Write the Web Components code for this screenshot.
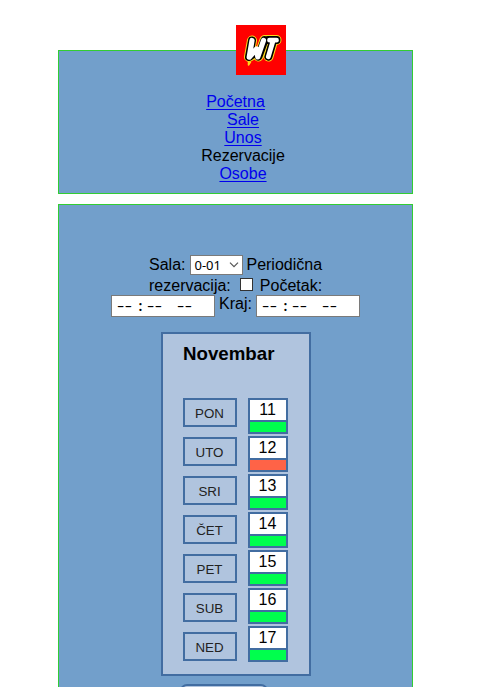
<!DOCTYPE html>
<html lang="bs">
<head>
<meta charset="utf-8">
<title>Rezervacije</title>
<style>
html{height:100%;overflow:hidden}
body{margin:0;height:687px;overflow:hidden;background:#fff;color:#000;font:16px/18px "Liberation Sans",Arial,sans-serif;--line:#426da1;--panel:#729fcb;--soft:#b0c4de}
</style>
</head>
<body>
<wt-page></wt-page>
<script>
function define(name, html, setup) {
  const t = document.createElement('template');
  t.innerHTML = html;
  customElements.define(name, class extends HTMLElement {
    constructor() {
      super();
      this.attachShadow({mode: 'open'}).append(t.content.cloneNode(true));
    }
    connectedCallback() { if (setup) setup(this, this.shadowRoot); }
  });
}

define('wt-logo', `<style>:host{display:block;width:50px;height:50px}svg{display:block}</style>
<svg width="50" height="50" viewBox="0 0 50 50">
<rect width="50" height="50" fill="#f00"/>
<g fill="none" stroke-linejoin="round" stroke-linecap="round">
<g stroke="#ffd91a" stroke-width="10"><path d="M16 15.500L13 32L20 28L22.500 31.500L28.500 15M29 15H40.500M37 16L32.500 31.500"/><path d="M12.500 36v4l2-3" stroke-width="1.500"/></g>
<path stroke="#000" stroke-width="8" d="M16 15.500L13 32L20 27L22.500 31.500L28.500 15M32 15H40.500M37 16L32.500 31.500"/>
<path stroke="#fff" stroke-width="5.200" d="M16 15.500L13.200 32.200L20.500 24L21.800 32L27.500 15.500"/>
<path stroke="#000" stroke-width="7" d="M34 15.200H40.500M37 16L32.300 31.800"/>
<path stroke="#fff" stroke-width="4.800" d="M33.500 15.200H40.500M37 16L32.300 31.800"/>
</g></svg>`);

define('wt-panel', `<style>:host{display:block;box-sizing:border-box;width:355px;border:1px solid #32cd32;background:var(--panel)}</style><slot></slot>`);

define('wt-nav-item', `<style>:host{display:block;height:18px;text-align:center}a{color:#00e;text-decoration:underline 1px;text-underline-offset:2px;text-decoration-skip-ink:none}</style><slot></slot>`, (el, root) => {
  if (!el.hasAttribute('href') || root.querySelector('a')) return;
  const a = document.createElement('a');
  a.href = el.getAttribute('href');
  a.append(root.querySelector('slot'));
  root.append(a);
});

define('wt-select', `<style>:host{display:inline-flex;box-sizing:border-box;width:53px;height:20px;border:1px solid #7a7a7a;background:#fff;align-items:center;justify-content:space-between;padding:0 3px;font:13px/18px "Noto Sans",sans-serif}</style><slot></slot><svg width="10" height="6" viewBox="0 0 10 6"><path d="M1 .7l4 4 4-4" fill="none" stroke="#555" stroke-width="1.200"/></svg>`);

define('wt-check', `<style>:host{display:block;box-sizing:border-box;width:13px;height:13px;border:1px solid #333;background:#fff}</style>`);

define('wt-time', `<style>:host{display:grid;box-sizing:border-box;width:104px;height:22px;border:1px solid #7a7a7a;background:#fff;grid-template-columns:17px 13px 17px 13px 17px;padding-left:5px;align-items:center;font:13.33px/20px "Noto Sans",sans-serif}
span{display:block;font-size:15px;line-height:18px;letter-spacing:.3px;white-space:nowrap;height:20px;transform:scaleX(1.5);transform-origin:0 50%}.c{font-size:14px;line-height:20px;text-align:center;letter-spacing:0;font-weight:600;transform:none}</style>
<span>--</span><span class="c">:</span><span>--</span><i></i><span>--</span>`);

define('wt-day', `<style>:host{display:flex;box-sizing:border-box;width:54px;height:29px;border:2px solid var(--line);align-items:center;justify-content:center;font-size:13.33px;line-height:15px;color:#222;padding:1px 1px 0 0}</style><slot></slot>`);

define('wt-date', `<style>:host{display:flex;flex-direction:column;box-sizing:border-box;width:40px;height:36px;border:2px solid var(--line);background:#fff;text-align:center}
div{height:20px;line-height:19px;padding-right:1px}i{display:block;height:10px;border-top:2px solid var(--line);background:#00ff4d}:host([busy]) i{background:#ff6347}</style><div><slot></slot></div><i></i>`);

define('wt-calendar', `<style>:host{display:block;box-sizing:border-box;width:150px;height:344px;border:2px solid var(--line);background:var(--soft);padding:9px 20px 0}
h3{margin:0;font-size:18.720px;line-height:22px;height:55px}.cols{display:flex;gap:11px}.days,.dates{display:flex;flex-direction:column}.days{gap:10px}.dates{gap:2px}</style>
<h3><slot></slot></h3><div class="cols"><div class="days"><slot name="day"></slot></div><div class="dates"><slot name="date"></slot></div></div>`);

define('wt-page', `<style>
:host{display:flex;flex-direction:column;gap:10px;height:687px;padding:50px 0 0 58px;box-sizing:border-box;overflow:hidden}
.head{height:144px;position:relative;flex:none}
wt-logo{position:absolute;left:177px;top:-26px}
nav{display:flex;flex-direction:column;padding:42px 0 0 15px}
nav wt-nav-item:first-child{margin-left:-15px}
.main{flex:1;min-height:0;border-bottom:0;overflow:hidden}
.row{display:flex;align-items:flex-start;white-space:nowrap}
.r1{padding:50px 0 0 90px;height:20px}
.r2{padding-left:90px;height:20px}
.r3{padding-left:52px;height:22px}
.r1 span{margin-top:1px}.r1 wt-select{margin:0 3px 0 5px}
.r2 span{margin-top:2px}.r2 wt-check{margin:3px 7px 0 9px}
.r3 wt-time:first-child{margin-right:4px}.r3 span{width:37px}
wt-calendar{margin:15px 0 0 102px}
.btn{box-sizing:border-box;margin:8px 0 0 121px;width:88px;height:30px;border:2px solid var(--line);border-radius:7px;background:var(--soft)}
</style>
<wt-panel class="head"><wt-logo></wt-logo><nav><wt-nav-item href="#pocetna">Početna</wt-nav-item><wt-nav-item href="#sale">Sale</wt-nav-item><wt-nav-item href="#unos">Unos</wt-nav-item><wt-nav-item>Rezervacije</wt-nav-item><wt-nav-item href="#osobe">Osobe</wt-nav-item></nav></wt-panel>
<wt-panel class="main">
<div class="row r1"><span>Sala:</span><wt-select>0-01</wt-select><span>Periodična</span></div>
<div class="row r2"><span>rezervacija:</span><wt-check></wt-check><span>Početak:</span></div>
<div class="row r3"><wt-time></wt-time><span>Kraj:</span><wt-time></wt-time></div>
<wt-calendar>Novembar
<wt-day slot="day">PON</wt-day><wt-day slot="day">UTO</wt-day><wt-day slot="day">SRI</wt-day><wt-day slot="day">ČET</wt-day><wt-day slot="day">PET</wt-day><wt-day slot="day">SUB</wt-day><wt-day slot="day">NED</wt-day>
<wt-date slot="date">11</wt-date><wt-date slot="date" busy>12</wt-date><wt-date slot="date">13</wt-date><wt-date slot="date">14</wt-date><wt-date slot="date">15</wt-date><wt-date slot="date">16</wt-date><wt-date slot="date">17</wt-date>
</wt-calendar>
<div class="btn"></div>
</wt-panel>`);
</script>
</body>
</html>
